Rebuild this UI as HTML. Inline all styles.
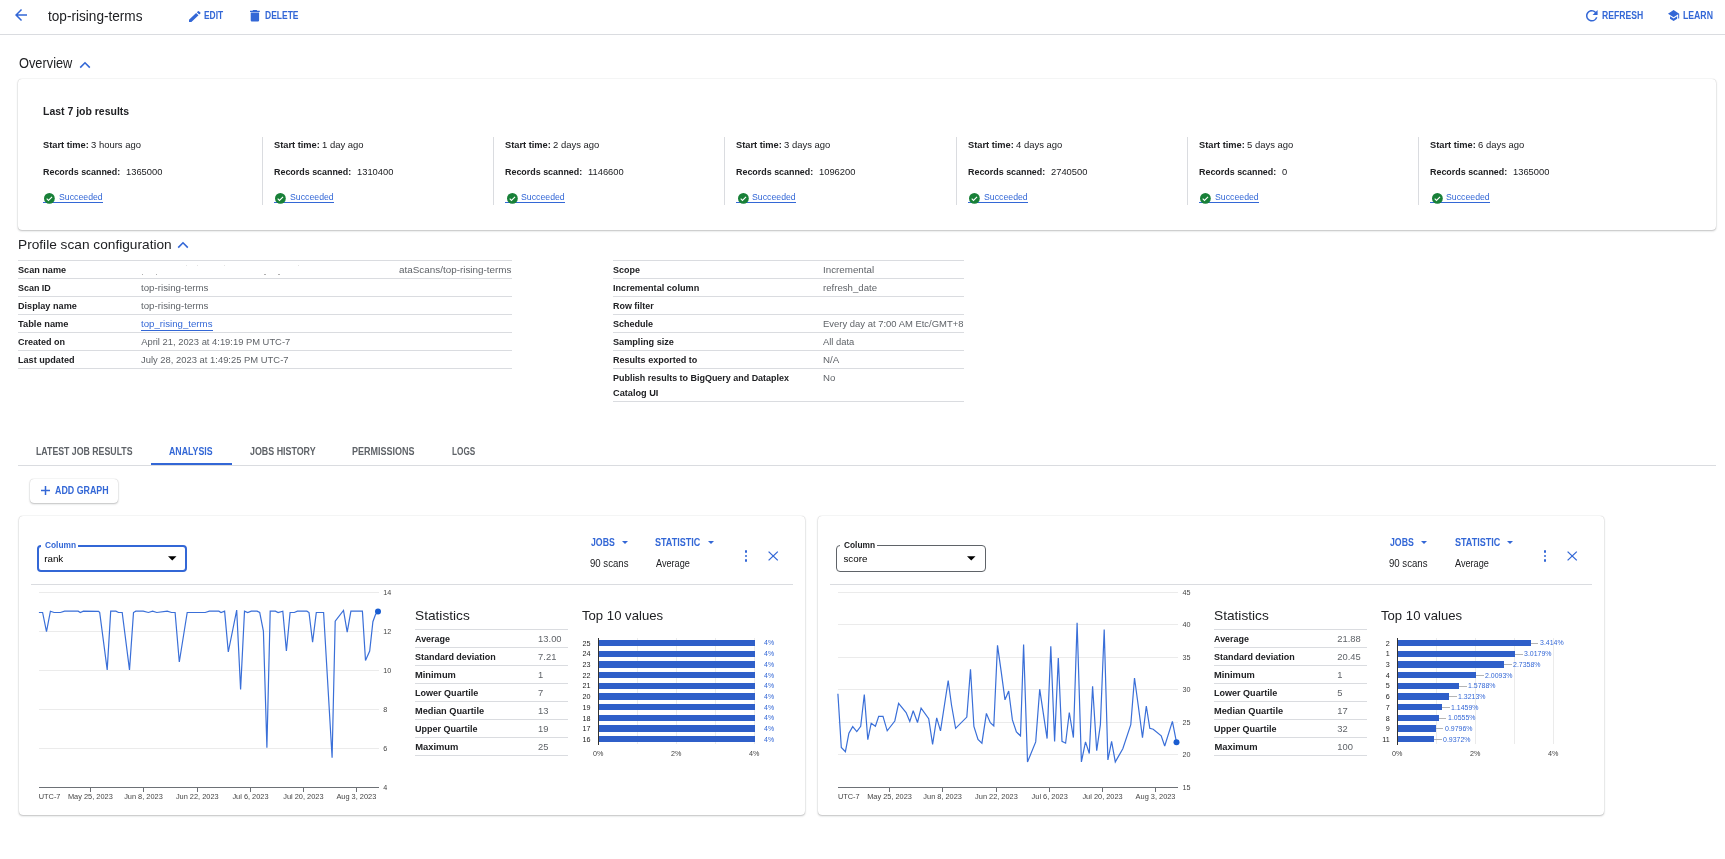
<!DOCTYPE html>
<html><head><meta charset="utf-8"><title>top-rising-terms</title>
<style>
html,body{margin:0;padding:0;background:#fff;width:1725px;height:859px;overflow:hidden;position:relative;font-family:"Liberation Sans", sans-serif;}
.t{position:absolute;white-space:pre;}
svg{position:absolute;overflow:visible;}
</style></head><body><div id="root" style="position:absolute;left:0;top:0;width:1725px;height:859px;will-change:transform">
<div style="position:absolute;left:0px;top:34px;width:1725px;height:1px;background:#dadce0;"></div><svg style="left:15px;top:9px" width="12.00" height="12.00" viewBox="4 4 16 16" preserveAspectRatio="none"><path d="M20 11H7.83l5.59-5.59L12 4l-8 8 8 8 1.41-1.41L7.83 13H20v-2z" fill="#3367d6"/></svg><svg style="left:188.9px;top:10.5px" width="11.40" height="11.00" viewBox="3 3 17.71 18" preserveAspectRatio="none"><path d="M3 17.25V21h3.75L17.81 9.94l-3.75-3.75L3 17.25zM20.71 7.04a1 1 0 0 0 0-1.41l-2.34-2.34a1 1 0 0 0-1.41 0l-1.83 1.83 3.75 3.75 1.83-1.83z" fill="#3367d6"/></svg><svg style="left:250.2px;top:10.1px" width="9.80" height="11.40" viewBox="5 3 14 18" preserveAspectRatio="none"><path d="M6 19c0 1.1.9 2 2 2h8c1.1 0 2-.9 2-2V7H6v12zM19 4h-3.5l-1-1h-5l-1 1H5v2h14V4z" fill="#3367d6"/></svg><svg style="left:1586.3px;top:10px" width="11.60" height="11.50" viewBox="4 4 16 16" preserveAspectRatio="none"><path d="M17.65 6.35A7.958 7.958 0 0 0 12 4c-4.42 0-7.99 3.58-7.99 8s3.57 8 7.99 8c3.73 0 6.84-2.55 7.73-6h-2.08A5.99 5.99 0 0 1 12 18c-3.31 0-6-2.69-6-6s2.69-6 6-6c1.66 0 3.14.69 4.22 1.78L13 11h7V4l-2.35 2.35z" fill="#3367d6"/></svg><svg style="left:1668.1px;top:10.3px" width="11.20" height="11.00" viewBox="1 3 22 18" preserveAspectRatio="none"><path d="M5 13.18v4L12 21l7-3.82v-4L12 17l-7-3.82zM12 3 1 9l11 6 9-4.91V17h2V9L12 3z" fill="#3367d6"/></svg><svg style="left:79px;top:61px" width="12" height="8" viewBox="0 0 12 8"><path d="M1.2 6.6 6 1.8l4.8 4.8" stroke="#3367d6" stroke-width="1.6" fill="none"/></svg><div style="position:absolute;left:18px;top:79px;width:1697.5px;height:150.5px;background:#fff;border-radius:4px;box-shadow:0 1px 2px 0 rgba(60,64,67,.3),0 0 1px 0 rgba(60,64,67,.35)"></div><div style="position:absolute;left:42.9px;top:202px;width:60.1px;height:1px;background:#3367d6;"></div><svg style="left:44.2px;top:192.5px" width="10.8" height="10.8" viewBox="0 0 24 24"><circle cx="12" cy="12" r="12" fill="#188038"/><path d="M6 12.6l3.9 3.9 8-8" stroke="#fff" stroke-width="2.4" fill="none"/></svg><div style="position:absolute;left:262px;top:137px;width:1px;height:68px;background:#dadce0;"></div><div style="position:absolute;left:274.0px;top:202px;width:60.1px;height:1px;background:#3367d6;"></div><svg style="left:275.3px;top:192.5px" width="10.8" height="10.8" viewBox="0 0 24 24"><circle cx="12" cy="12" r="12" fill="#188038"/><path d="M6 12.6l3.9 3.9 8-8" stroke="#fff" stroke-width="2.4" fill="none"/></svg><div style="position:absolute;left:493px;top:137px;width:1px;height:68px;background:#dadce0;"></div><div style="position:absolute;left:505.3px;top:202px;width:60.1px;height:1px;background:#3367d6;"></div><svg style="left:506.6px;top:192.5px" width="10.8" height="10.8" viewBox="0 0 24 24"><circle cx="12" cy="12" r="12" fill="#188038"/><path d="M6 12.6l3.9 3.9 8-8" stroke="#fff" stroke-width="2.4" fill="none"/></svg><div style="position:absolute;left:724px;top:137px;width:1px;height:68px;background:#dadce0;"></div><div style="position:absolute;left:736.4px;top:202px;width:60.1px;height:1px;background:#3367d6;"></div><svg style="left:737.7px;top:192.5px" width="10.8" height="10.8" viewBox="0 0 24 24"><circle cx="12" cy="12" r="12" fill="#188038"/><path d="M6 12.6l3.9 3.9 8-8" stroke="#fff" stroke-width="2.4" fill="none"/></svg><div style="position:absolute;left:956px;top:137px;width:1px;height:68px;background:#dadce0;"></div><div style="position:absolute;left:968.0px;top:202px;width:60.1px;height:1px;background:#3367d6;"></div><svg style="left:969.3px;top:192.5px" width="10.8" height="10.8" viewBox="0 0 24 24"><circle cx="12" cy="12" r="12" fill="#188038"/><path d="M6 12.6l3.9 3.9 8-8" stroke="#fff" stroke-width="2.4" fill="none"/></svg><div style="position:absolute;left:1187px;top:137px;width:1px;height:68px;background:#dadce0;"></div><div style="position:absolute;left:1199.1px;top:202px;width:60.1px;height:1px;background:#3367d6;"></div><svg style="left:1200.4px;top:192.5px" width="10.8" height="10.8" viewBox="0 0 24 24"><circle cx="12" cy="12" r="12" fill="#188038"/><path d="M6 12.6l3.9 3.9 8-8" stroke="#fff" stroke-width="2.4" fill="none"/></svg><div style="position:absolute;left:1418px;top:137px;width:1px;height:68px;background:#dadce0;"></div><div style="position:absolute;left:1430.3px;top:202px;width:60.1px;height:1px;background:#3367d6;"></div><svg style="left:1431.6px;top:192.5px" width="10.8" height="10.8" viewBox="0 0 24 24"><circle cx="12" cy="12" r="12" fill="#188038"/><path d="M6 12.6l3.9 3.9 8-8" stroke="#fff" stroke-width="2.4" fill="none"/></svg><svg style="left:177px;top:241px" width="12" height="8" viewBox="0 0 12 8"><path d="M1.2 6.6 6 1.8l4.8 4.8" stroke="#3367d6" stroke-width="1.6" fill="none"/></svg><div style="position:absolute;left:18px;top:260px;width:494px;height:1px;background:#dadce0;"></div><div style="position:absolute;left:18px;top:278px;width:494px;height:1px;background:#dadce0;"></div><div style="position:absolute;left:18px;top:296px;width:494px;height:1px;background:#dadce0;"></div><div style="position:absolute;left:18px;top:314px;width:494px;height:1px;background:#dadce0;"></div><div style="position:absolute;left:18px;top:332px;width:494px;height:1px;background:#dadce0;"></div><div style="position:absolute;left:18px;top:350px;width:494px;height:1px;background:#dadce0;"></div><div style="position:absolute;left:18px;top:368px;width:494px;height:1px;background:#dadce0;"></div><div style="position:absolute;left:141.5px;top:274px;width:1.5px;height:1px;background:#b0b0b0;"></div><div style="position:absolute;left:155.5px;top:274px;width:1.5px;height:1px;background:#b0b0b0;"></div><div style="position:absolute;left:264px;top:274px;width:1.5px;height:1px;background:#b0b0b0;"></div><div style="position:absolute;left:278px;top:274px;width:1.5px;height:1px;background:#b0b0b0;"></div><div style="position:absolute;left:185.5px;top:265px;width:1px;height:1px;background:#e4e4e4;"></div><div style="position:absolute;left:196.5px;top:265px;width:1px;height:1px;background:#e4e4e4;"></div><div style="position:absolute;left:224px;top:265px;width:1px;height:1px;background:#e4e4e4;"></div><div style="position:absolute;left:298px;top:265px;width:1px;height:1px;background:#e4e4e4;"></div><div style="position:absolute;left:141px;top:330px;width:72px;height:1px;background:#3367d6;"></div><div style="position:absolute;left:613px;top:260px;width:351px;height:1px;background:#dadce0;"></div><div style="position:absolute;left:613px;top:278px;width:351px;height:1px;background:#dadce0;"></div><div style="position:absolute;left:613px;top:296px;width:351px;height:1px;background:#dadce0;"></div><div style="position:absolute;left:613px;top:314px;width:351px;height:1px;background:#dadce0;"></div><div style="position:absolute;left:613px;top:332px;width:351px;height:1px;background:#dadce0;"></div><div style="position:absolute;left:613px;top:350px;width:351px;height:1px;background:#dadce0;"></div><div style="position:absolute;left:613px;top:368px;width:351px;height:1px;background:#dadce0;"></div><div style="position:absolute;left:613px;top:401px;width:351px;height:1px;background:#dadce0;"></div><div style="position:absolute;left:18px;top:465px;width:1698px;height:1px;background:#dadce0;"></div><div style="position:absolute;left:151px;top:463px;width:81px;height:2px;background:#3367d6;"></div><div style="position:absolute;left:30px;top:479px;width:88px;height:24px;background:#fff;border-radius:4px;box-shadow:0 1px 2px 0 rgba(60,64,67,.3),0 0 1px 0 rgba(60,64,67,.35)"></div><svg style="left:40px;top:485px" width="11" height="11" viewBox="0 0 11 11"><path d="M5.5 1v9M1 5.5h9" stroke="#3367d6" stroke-width="1.5"/></svg><div style="position:absolute;left:18.5px;top:516px;width:786.5px;height:298.5px;background:#fff;border-radius:4px;box-shadow:0 1px 2px 0 rgba(60,64,67,.3),0 0 1px 0 rgba(60,64,67,.35)"></div><div style="position:absolute;left:37.3px;top:545px;width:149.5px;height:27px;box-sizing:border-box;border:2px solid #3367d6;border-radius:4px"></div><div style="position:absolute;left:41.0px;top:542px;width:36.8px;height:5px;background:#fff;"></div><svg style="left:167.5px;top:556.3px" width="8.5" height="4.6" viewBox="0 0 10 5"><path d="M0 0h10L5 5z" fill="#000"/></svg><svg style="left:621.5px;top:541px" width="6" height="3" viewBox="0 0 10 5"><path d="M0 0h10L5 5z" fill="#3367d6"/></svg><svg style="left:707.8px;top:541px" width="6" height="3" viewBox="0 0 10 5"><path d="M0 0h10L5 5z" fill="#3367d6"/></svg><div style="position:absolute;left:744.6px;top:550.2px;width:2.6px;height:2.6px;border-radius:50%;background:#3367d6"></div><div style="position:absolute;left:744.6px;top:554.7px;width:2.6px;height:2.6px;border-radius:50%;background:#3367d6"></div><div style="position:absolute;left:744.6px;top:559.2px;width:2.6px;height:2.6px;border-radius:50%;background:#3367d6"></div><svg style="left:767.6px;top:551px" width="10.4" height="10" viewBox="0 0 10.4 10"><path d="M0.6 0.6l9.2 8.8M9.8 0.6l-9.2 8.8" stroke="#3367d6" stroke-width="1.3"/></svg><div style="position:absolute;left:31px;top:584px;width:762px;height:1px;background:#dadce0;"></div><div style="position:absolute;left:38.5px;top:592px;width:340px;height:1px;background:#ebebeb;"></div><div style="position:absolute;left:38.5px;top:631px;width:340px;height:1px;background:#ebebeb;"></div><div style="position:absolute;left:38.5px;top:670px;width:340px;height:1px;background:#ebebeb;"></div><div style="position:absolute;left:38.5px;top:709px;width:340px;height:1px;background:#ebebeb;"></div><div style="position:absolute;left:38.5px;top:748px;width:340px;height:1px;background:#ebebeb;"></div><div style="position:absolute;left:38.5px;top:787px;width:340px;height:1px;background:#6d7176;"></div><div style="position:absolute;left:90px;top:788px;width:1px;height:4px;background:#6d7176;"></div><div style="position:absolute;left:143px;top:788px;width:1px;height:4px;background:#6d7176;"></div><div style="position:absolute;left:197px;top:788px;width:1px;height:4px;background:#6d7176;"></div><div style="position:absolute;left:250px;top:788px;width:1px;height:4px;background:#6d7176;"></div><div style="position:absolute;left:303px;top:788px;width:1px;height:4px;background:#6d7176;"></div><div style="position:absolute;left:356px;top:788px;width:1px;height:4px;background:#6d7176;"></div><svg style="left:18px;top:580px" width="1200" height="200"><polyline points="20.9,32.5 24.6,32.5 28.5,51.6 32.4,31.2 36.1,32.5 42.4,32.5 46.6,31.2 60.2,31.2 62.3,32.5 65.4,31.2 80.6,31.4 81.7,32.5 89.2,89.9 92.7,31.2 97.9,31.2 100.5,32.5 104.2,32.5 111.5,89.9 115.5,32.5 117.8,31.2 125.2,31.2 130.4,32.5 134.6,31.2 138.8,32.5 149.3,31.2 153.5,32.5 157.1,32.5 161.3,82.0 169.2,32.5 187.2,32.5 191.4,31.2 200.9,31.2 203.0,32.5 206.6,31.2 210.3,72.0 218.7,30.1 222.6,109.5 226.5,31.2 229.7,32.5 233.3,31.2 239.1,31.2 241.7,32.5 245.4,51.1 248.9,167.8 252.2,31.2 257.4,31.2 260.1,32.5 264.8,31.2 268.4,71.0 272.1,32.5 276.3,32.5 279.4,31.2 288.9,31.2 291.0,32.5 294.6,62.1 298.3,32.5 305.6,32.5 314.1,177.7 317.2,41.1 325.5,30.5 329.2,52.2 332.9,31.2 344.4,31.2 347.5,80.4 351.7,71.0 354.9,41.7 357.5,34.5 360.0,31.4" fill="none" stroke="#3a6fd8" stroke-width="1.2" stroke-linejoin="miter" stroke-miterlimit="3"/><circle cx="360.0" cy="31.4" r="3" fill="#1a5dd1"/></svg><div style="position:absolute;left:415px;top:629px;width:153px;height:1px;background:#dadce0;"></div><div style="position:absolute;left:415px;top:647px;width:153px;height:1px;background:#dadce0;"></div><div style="position:absolute;left:415px;top:665px;width:153px;height:1px;background:#dadce0;"></div><div style="position:absolute;left:415px;top:683px;width:153px;height:1px;background:#dadce0;"></div><div style="position:absolute;left:415px;top:701px;width:153px;height:1px;background:#dadce0;"></div><div style="position:absolute;left:415px;top:719px;width:153px;height:1px;background:#dadce0;"></div><div style="position:absolute;left:415px;top:737px;width:153px;height:1px;background:#dadce0;"></div><div style="position:absolute;left:415px;top:755px;width:153px;height:1px;background:#dadce0;"></div><div style="position:absolute;left:637px;top:638px;width:1px;height:106px;background:#ebebeb;"></div><div style="position:absolute;left:676px;top:638px;width:1px;height:106px;background:#ebebeb;"></div><div style="position:absolute;left:715px;top:638px;width:1px;height:106px;background:#ebebeb;"></div><div style="position:absolute;left:754px;top:638px;width:1px;height:106px;background:#ebebeb;"></div><div style="position:absolute;left:598.4px;top:639.8px;width:156.2px;height:6.4px;background:#2f5fc9;"></div><div style="position:absolute;left:598.4px;top:650.5px;width:156.2px;height:6.4px;background:#2f5fc9;"></div><div style="position:absolute;left:598.4px;top:661.2px;width:156.2px;height:6.4px;background:#2f5fc9;"></div><div style="position:absolute;left:598.4px;top:671.9px;width:156.2px;height:6.4px;background:#2f5fc9;"></div><div style="position:absolute;left:598.4px;top:682.6px;width:156.2px;height:6.4px;background:#2f5fc9;"></div><div style="position:absolute;left:598.4px;top:693.3px;width:156.2px;height:6.4px;background:#2f5fc9;"></div><div style="position:absolute;left:598.4px;top:704.0px;width:156.2px;height:6.4px;background:#2f5fc9;"></div><div style="position:absolute;left:598.4px;top:714.7px;width:156.2px;height:6.4px;background:#2f5fc9;"></div><div style="position:absolute;left:598.4px;top:725.4px;width:156.2px;height:6.4px;background:#2f5fc9;"></div><div style="position:absolute;left:598.4px;top:736.1px;width:156.2px;height:6.4px;background:#2f5fc9;"></div><div style="position:absolute;left:597.9px;top:637.8px;width:1px;height:107px;background:#333;"></div><div style="position:absolute;left:817.7px;top:516px;width:786.5px;height:298.5px;background:#fff;border-radius:4px;box-shadow:0 1px 2px 0 rgba(60,64,67,.3),0 0 1px 0 rgba(60,64,67,.35)"></div><div style="position:absolute;left:836.2px;top:545px;width:149.5px;height:27px;box-sizing:border-box;border:1px solid #5f6368;border-radius:4px"></div><div style="position:absolute;left:840.0px;top:542px;width:36.8px;height:5px;background:#fff;"></div><svg style="left:966.7px;top:556.3px" width="8.5" height="4.6" viewBox="0 0 10 5"><path d="M0 0h10L5 5z" fill="#000"/></svg><svg style="left:1420.7px;top:541px" width="6" height="3" viewBox="0 0 10 5"><path d="M0 0h10L5 5z" fill="#3367d6"/></svg><svg style="left:1507.0px;top:541px" width="6" height="3" viewBox="0 0 10 5"><path d="M0 0h10L5 5z" fill="#3367d6"/></svg><div style="position:absolute;left:1543.8px;top:550.2px;width:2.6px;height:2.6px;border-radius:50%;background:#3367d6"></div><div style="position:absolute;left:1543.8px;top:554.7px;width:2.6px;height:2.6px;border-radius:50%;background:#3367d6"></div><div style="position:absolute;left:1543.8px;top:559.2px;width:2.6px;height:2.6px;border-radius:50%;background:#3367d6"></div><svg style="left:1566.8px;top:551px" width="10.4" height="10" viewBox="0 0 10.4 10"><path d="M0.6 0.6l9.2 8.8M9.8 0.6l-9.2 8.8" stroke="#3367d6" stroke-width="1.3"/></svg><div style="position:absolute;left:830.2px;top:584px;width:762px;height:1px;background:#dadce0;"></div><div style="position:absolute;left:837.7px;top:592px;width:340px;height:1px;background:#ebebeb;"></div><div style="position:absolute;left:837.7px;top:624px;width:340px;height:1px;background:#ebebeb;"></div><div style="position:absolute;left:837.7px;top:657px;width:340px;height:1px;background:#ebebeb;"></div><div style="position:absolute;left:837.7px;top:689px;width:340px;height:1px;background:#ebebeb;"></div><div style="position:absolute;left:837.7px;top:722px;width:340px;height:1px;background:#ebebeb;"></div><div style="position:absolute;left:837.7px;top:754px;width:340px;height:1px;background:#ebebeb;"></div><div style="position:absolute;left:837.7px;top:787px;width:340px;height:1px;background:#6d7176;"></div><div style="position:absolute;left:889.2px;top:788px;width:1px;height:4px;background:#6d7176;"></div><div style="position:absolute;left:942.2px;top:788px;width:1px;height:4px;background:#6d7176;"></div><div style="position:absolute;left:996.2px;top:788px;width:1px;height:4px;background:#6d7176;"></div><div style="position:absolute;left:1049.2px;top:788px;width:1px;height:4px;background:#6d7176;"></div><div style="position:absolute;left:1102.2px;top:788px;width:1px;height:4px;background:#6d7176;"></div><div style="position:absolute;left:1155.2px;top:788px;width:1px;height:4px;background:#6d7176;"></div><svg style="left:18px;top:580px" width="1200" height="200"><polyline points="819.9,113.7 823.3,167.4 827.4,171.7 830.9,153.1 834.7,146.6 838.8,151.6 842.7,146.3 846.3,114.5 849.8,159.6 853.2,143.2 857.4,146.3 860.7,136.4 865.0,136.4 869.2,150.8 876.8,141.0 880.6,123.3 888.1,132.6 891.8,141.4 895.2,130.8 899.5,142.5 903.1,128.1 910.7,138.7 914.6,164.4 918.7,137.9 922.5,150.8 930.2,100.5 933.5,125.0 937.6,148.3 948.8,137.1 952.5,89.3 955.9,146.5 960.0,159.5 963.9,163.2 968.4,133.4 972.3,142.7 975.8,145.9 979.5,65.4 983.3,92.4 987.0,119.8 990.7,111.0 994.4,139.9 998.4,152.0 1002.5,155.8 1005.6,64.5 1009.5,181.9 1017.7,161.9 1021.7,109.2 1029.1,158.6 1032.8,66.3 1036.6,161.4 1040.3,78.1 1044.0,161.4 1047.6,163.2 1051.3,132.5 1055.4,157.6 1059.1,42.7 1063.4,181.9 1067.5,161.9 1071.3,173.5 1074.6,106.4 1078.7,170.7 1082.4,144.6 1086.2,49.6 1089.9,180.0 1093.6,161.4 1097.3,181.9 1104.8,168.8 1112.8,144.6 1116.5,98.0 1120.3,126.0 1124.5,157.6 1128.3,126.0 1131.8,148.3 1135.2,149.2 1143.2,155.8 1146.7,166.0 1154.4,141.4 1158.5,162.3" fill="none" stroke="#3a6fd8" stroke-width="1.2" stroke-linejoin="miter" stroke-miterlimit="3"/><circle cx="1158.5" cy="162.3" r="3" fill="#1a5dd1"/></svg><div style="position:absolute;left:1214.2px;top:629px;width:153px;height:1px;background:#dadce0;"></div><div style="position:absolute;left:1214.2px;top:647px;width:153px;height:1px;background:#dadce0;"></div><div style="position:absolute;left:1214.2px;top:665px;width:153px;height:1px;background:#dadce0;"></div><div style="position:absolute;left:1214.2px;top:683px;width:153px;height:1px;background:#dadce0;"></div><div style="position:absolute;left:1214.2px;top:701px;width:153px;height:1px;background:#dadce0;"></div><div style="position:absolute;left:1214.2px;top:719px;width:153px;height:1px;background:#dadce0;"></div><div style="position:absolute;left:1214.2px;top:737px;width:153px;height:1px;background:#dadce0;"></div><div style="position:absolute;left:1214.2px;top:755px;width:153px;height:1px;background:#dadce0;"></div><div style="position:absolute;left:1436px;top:638px;width:1px;height:106px;background:#ebebeb;"></div><div style="position:absolute;left:1475px;top:638px;width:1px;height:106px;background:#ebebeb;"></div><div style="position:absolute;left:1514px;top:638px;width:1px;height:106px;background:#ebebeb;"></div><div style="position:absolute;left:1553px;top:638px;width:1px;height:106px;background:#ebebeb;"></div><div style="position:absolute;left:1397.6px;top:639.8px;width:133.1px;height:6.4px;background:#2f5fc9;"></div><div style="position:absolute;left:1530.7px;top:642.8px;width:7.5px;height:1px;background:#b4b4b4;"></div><div style="position:absolute;left:1397.6px;top:650.5px;width:117.7px;height:6.4px;background:#2f5fc9;"></div><div style="position:absolute;left:1515.3px;top:653.5px;width:7.5px;height:1px;background:#b4b4b4;"></div><div style="position:absolute;left:1397.6px;top:661.2px;width:106.7px;height:6.4px;background:#2f5fc9;"></div><div style="position:absolute;left:1504.3px;top:664.2px;width:7.5px;height:1px;background:#b4b4b4;"></div><div style="position:absolute;left:1397.6px;top:671.9px;width:78.4px;height:6.4px;background:#2f5fc9;"></div><div style="position:absolute;left:1476.0px;top:674.9px;width:7.5px;height:1px;background:#b4b4b4;"></div><div style="position:absolute;left:1397.6px;top:682.6px;width:61.6px;height:6.4px;background:#2f5fc9;"></div><div style="position:absolute;left:1459.2px;top:685.6px;width:7.5px;height:1px;background:#b4b4b4;"></div><div style="position:absolute;left:1397.6px;top:693.3px;width:51.5px;height:6.4px;background:#2f5fc9;"></div><div style="position:absolute;left:1449.1px;top:696.3px;width:7.5px;height:1px;background:#b4b4b4;"></div><div style="position:absolute;left:1397.6px;top:704.0px;width:44.7px;height:6.4px;background:#2f5fc9;"></div><div style="position:absolute;left:1442.3px;top:707.0px;width:7.5px;height:1px;background:#b4b4b4;"></div><div style="position:absolute;left:1397.6px;top:714.7px;width:41.2px;height:6.4px;background:#2f5fc9;"></div><div style="position:absolute;left:1438.8px;top:717.7px;width:7.5px;height:1px;background:#b4b4b4;"></div><div style="position:absolute;left:1397.6px;top:725.4px;width:38.2px;height:6.4px;background:#2f5fc9;"></div><div style="position:absolute;left:1435.8px;top:728.4px;width:7.5px;height:1px;background:#b4b4b4;"></div><div style="position:absolute;left:1397.6px;top:736.1px;width:36.6px;height:6.4px;background:#2f5fc9;"></div><div style="position:absolute;left:1434.2px;top:739.1px;width:7.5px;height:1px;background:#b4b4b4;"></div><div style="position:absolute;left:1397.1px;top:637.8px;width:1px;height:107px;background:#333;"></div>
<div class="t" style="left:48.00px;top:9px;font-size:14px;line-height:14px;color:#202124;transform:scaleX(0.9718);transform-origin:0 0;">top-rising-terms</div><div class="t" style="left:204.40px;top:11px;font-size:10.2px;line-height:10.2px;color:#3367d6;font-weight:700;transform:scaleX(0.8256);transform-origin:0 0;">EDIT</div><div class="t" style="left:264.80px;top:11px;font-size:10.2px;line-height:10.2px;color:#3367d6;font-weight:700;transform:scaleX(0.8343);transform-origin:0 0;">DELETE</div><div class="t" style="left:1601.50px;top:11px;font-size:10.2px;line-height:10.2px;color:#3367d6;font-weight:700;transform:scaleX(0.8464);transform-origin:0 0;">REFRESH</div><div class="t" style="left:1682.80px;top:11px;font-size:10.2px;line-height:10.2px;color:#3367d6;font-weight:700;transform:scaleX(0.8522);transform-origin:0 0;">LEARN</div><div class="t" style="left:18.60px;top:57px;font-size:13.8px;line-height:13.8px;color:#202124;transform:scaleX(0.9281);transform-origin:0 0;">Overview</div><div class="t" style="left:42.90px;top:106px;font-size:11px;line-height:11px;color:#202124;font-weight:700;transform:scaleX(0.9518);transform-origin:0 0;">Last 7 job results</div><div class="t" style="left:42.90px;top:140px;font-size:9.8px;line-height:9.8px;color:#202124;font-weight:700;transform:scaleX(0.9463);transform-origin:0 0;">Start time:</div><div class="t" style="left:90.90px;top:140px;font-size:9.8px;line-height:9.8px;color:#202124;transform:scaleX(0.9650);transform-origin:0 0;">3 hours ago</div><div class="t" style="left:42.90px;top:167px;font-size:9.8px;line-height:9.8px;color:#202124;font-weight:700;transform:scaleX(0.9094);transform-origin:0 0;">Records scanned:</div><div class="t" style="left:125.80px;top:167px;font-size:9.8px;line-height:9.8px;color:#202124;transform:scaleX(0.9550);transform-origin:0 0;">1365000</div><div class="t" style="left:58.70px;top:192px;font-size:9.8px;line-height:9.8px;color:#3367d6;transform:scaleX(0.8914);transform-origin:0 0;">Succeeded</div><div class="t" style="left:274.00px;top:140px;font-size:9.8px;line-height:9.8px;color:#202124;font-weight:700;transform:scaleX(0.9463);transform-origin:0 0;">Start time:</div><div class="t" style="left:322.00px;top:140px;font-size:9.8px;line-height:9.8px;color:#202124;transform:scaleX(0.9650);transform-origin:0 0;">1 day ago</div><div class="t" style="left:274.00px;top:167px;font-size:9.8px;line-height:9.8px;color:#202124;font-weight:700;transform:scaleX(0.9094);transform-origin:0 0;">Records scanned:</div><div class="t" style="left:356.90px;top:167px;font-size:9.8px;line-height:9.8px;color:#202124;transform:scaleX(0.9550);transform-origin:0 0;">1310400</div><div class="t" style="left:289.80px;top:192px;font-size:9.8px;line-height:9.8px;color:#3367d6;transform:scaleX(0.8914);transform-origin:0 0;">Succeeded</div><div class="t" style="left:505.30px;top:140px;font-size:9.8px;line-height:9.8px;color:#202124;font-weight:700;transform:scaleX(0.9463);transform-origin:0 0;">Start time:</div><div class="t" style="left:553.30px;top:140px;font-size:9.8px;line-height:9.8px;color:#202124;transform:scaleX(0.9650);transform-origin:0 0;">2 days ago</div><div class="t" style="left:505.30px;top:167px;font-size:9.8px;line-height:9.8px;color:#202124;font-weight:700;transform:scaleX(0.9094);transform-origin:0 0;">Records scanned:</div><div class="t" style="left:588.20px;top:167px;font-size:9.8px;line-height:9.8px;color:#202124;transform:scaleX(0.9550);transform-origin:0 0;">1146600</div><div class="t" style="left:521.10px;top:192px;font-size:9.8px;line-height:9.8px;color:#3367d6;transform:scaleX(0.8914);transform-origin:0 0;">Succeeded</div><div class="t" style="left:736.40px;top:140px;font-size:9.8px;line-height:9.8px;color:#202124;font-weight:700;transform:scaleX(0.9463);transform-origin:0 0;">Start time:</div><div class="t" style="left:784.40px;top:140px;font-size:9.8px;line-height:9.8px;color:#202124;transform:scaleX(0.9650);transform-origin:0 0;">3 days ago</div><div class="t" style="left:736.40px;top:167px;font-size:9.8px;line-height:9.8px;color:#202124;font-weight:700;transform:scaleX(0.9094);transform-origin:0 0;">Records scanned:</div><div class="t" style="left:819.30px;top:167px;font-size:9.8px;line-height:9.8px;color:#202124;transform:scaleX(0.9550);transform-origin:0 0;">1096200</div><div class="t" style="left:752.20px;top:192px;font-size:9.8px;line-height:9.8px;color:#3367d6;transform:scaleX(0.8914);transform-origin:0 0;">Succeeded</div><div class="t" style="left:968.00px;top:140px;font-size:9.8px;line-height:9.8px;color:#202124;font-weight:700;transform:scaleX(0.9463);transform-origin:0 0;">Start time:</div><div class="t" style="left:1016.00px;top:140px;font-size:9.8px;line-height:9.8px;color:#202124;transform:scaleX(0.9650);transform-origin:0 0;">4 days ago</div><div class="t" style="left:968.00px;top:167px;font-size:9.8px;line-height:9.8px;color:#202124;font-weight:700;transform:scaleX(0.9094);transform-origin:0 0;">Records scanned:</div><div class="t" style="left:1050.90px;top:167px;font-size:9.8px;line-height:9.8px;color:#202124;transform:scaleX(0.9550);transform-origin:0 0;">2740500</div><div class="t" style="left:983.80px;top:192px;font-size:9.8px;line-height:9.8px;color:#3367d6;transform:scaleX(0.8914);transform-origin:0 0;">Succeeded</div><div class="t" style="left:1199.10px;top:140px;font-size:9.8px;line-height:9.8px;color:#202124;font-weight:700;transform:scaleX(0.9463);transform-origin:0 0;">Start time:</div><div class="t" style="left:1247.10px;top:140px;font-size:9.8px;line-height:9.8px;color:#202124;transform:scaleX(0.9650);transform-origin:0 0;">5 days ago</div><div class="t" style="left:1199.10px;top:167px;font-size:9.8px;line-height:9.8px;color:#202124;font-weight:700;transform:scaleX(0.9094);transform-origin:0 0;">Records scanned:</div><div class="t" style="left:1282.00px;top:167px;font-size:9.8px;line-height:9.8px;color:#202124;transform:scaleX(0.9550);transform-origin:0 0;">0</div><div class="t" style="left:1214.90px;top:192px;font-size:9.8px;line-height:9.8px;color:#3367d6;transform:scaleX(0.8914);transform-origin:0 0;">Succeeded</div><div class="t" style="left:1430.30px;top:140px;font-size:9.8px;line-height:9.8px;color:#202124;font-weight:700;transform:scaleX(0.9463);transform-origin:0 0;">Start time:</div><div class="t" style="left:1478.30px;top:140px;font-size:9.8px;line-height:9.8px;color:#202124;transform:scaleX(0.9650);transform-origin:0 0;">6 days ago</div><div class="t" style="left:1430.30px;top:167px;font-size:9.8px;line-height:9.8px;color:#202124;font-weight:700;transform:scaleX(0.9094);transform-origin:0 0;">Records scanned:</div><div class="t" style="left:1513.20px;top:167px;font-size:9.8px;line-height:9.8px;color:#202124;transform:scaleX(0.9550);transform-origin:0 0;">1365000</div><div class="t" style="left:1446.10px;top:192px;font-size:9.8px;line-height:9.8px;color:#3367d6;transform:scaleX(0.8914);transform-origin:0 0;">Succeeded</div><div class="t" style="left:17.59px;top:238px;font-size:13.5px;line-height:13.5px;color:#202124;transform:scaleX(1.0141);transform-origin:0 0;">Profile scan configuration</div><div class="t" style="left:18.30px;top:265px;font-size:9.4px;line-height:9.4px;color:#202124;font-weight:700;transform:scaleX(0.9718);transform-origin:0 0;">Scan name</div><div class="t" style="left:398.60px;top:265px;font-size:9.4px;line-height:9.4px;color:#5f6368;transform:scaleX(1.0530);transform-origin:0 0;">ataScans/top-rising-terms</div><div class="t" style="left:18.30px;top:283px;font-size:9.4px;line-height:9.4px;color:#202124;font-weight:700;transform:scaleX(0.9533);transform-origin:0 0;">Scan ID</div><div class="t" style="left:141.20px;top:283px;font-size:9.4px;line-height:9.4px;color:#5f6368;transform:scaleX(1.0362);transform-origin:0 0;">top-rising-terms</div><div class="t" style="left:18.30px;top:301px;font-size:9.4px;line-height:9.4px;color:#202124;font-weight:700;transform:scaleX(0.9730);transform-origin:0 0;">Display name</div><div class="t" style="left:141.20px;top:301px;font-size:9.4px;line-height:9.4px;color:#5f6368;transform:scaleX(1.0362);transform-origin:0 0;">top-rising-terms</div><div class="t" style="left:18.30px;top:319px;font-size:9.4px;line-height:9.4px;color:#202124;font-weight:700;transform:scaleX(0.9927);transform-origin:0 0;">Table name</div><div class="t" style="left:141.20px;top:319px;font-size:9.4px;line-height:9.4px;color:#3367d6;transform:scaleX(1.0314);transform-origin:0 0;">top_rising_terms</div><div class="t" style="left:18.30px;top:337px;font-size:9.4px;line-height:9.4px;color:#202124;font-weight:700;transform:scaleX(0.9626);transform-origin:0 0;">Created on</div><div class="t" style="left:141.20px;top:337px;font-size:9.4px;line-height:9.4px;color:#5f6368;">April 21, 2023 at 4:19:19 PM UTC-7</div><div class="t" style="left:18.30px;top:355px;font-size:9.4px;line-height:9.4px;color:#202124;font-weight:700;transform:scaleX(0.9691);transform-origin:0 0;">Last updated</div><div class="t" style="left:141.20px;top:355px;font-size:9.4px;line-height:9.4px;color:#5f6368;transform:scaleX(1.0038);transform-origin:0 0;">July 28, 2023 at 1:49:25 PM UTC-7</div><div class="t" style="left:613.20px;top:265px;font-size:9.4px;line-height:9.4px;color:#202124;font-weight:700;transform:scaleX(0.9563);transform-origin:0 0;">Scope</div><div class="t" style="left:823.00px;top:265px;font-size:9.4px;line-height:9.4px;color:#5f6368;transform:scaleX(1.0430);transform-origin:0 0;">Incremental</div><div class="t" style="left:613.20px;top:283px;font-size:9.4px;line-height:9.4px;color:#202124;font-weight:700;transform:scaleX(0.9737);transform-origin:0 0;">Incremental column</div><div class="t" style="left:823.00px;top:283px;font-size:9.4px;line-height:9.4px;color:#5f6368;transform:scaleX(1.0262);transform-origin:0 0;">refresh_date</div><div class="t" style="left:613.20px;top:301px;font-size:9.4px;line-height:9.4px;color:#202124;font-weight:700;transform:scaleX(0.9521);transform-origin:0 0;">Row filter</div><div class="t" style="left:613.20px;top:319px;font-size:9.4px;line-height:9.4px;color:#202124;font-weight:700;transform:scaleX(0.9622);transform-origin:0 0;">Schedule</div><div class="t" style="left:823.00px;top:319px;font-size:9.4px;line-height:9.4px;color:#5f6368;transform:scaleX(1.0080);transform-origin:0 0;">Every day at 7:00 AM Etc/GMT+8</div><div class="t" style="left:613.20px;top:337px;font-size:9.4px;line-height:9.4px;color:#202124;font-weight:700;transform:scaleX(0.9743);transform-origin:0 0;">Sampling size</div><div class="t" style="left:823.00px;top:337px;font-size:9.4px;line-height:9.4px;color:#5f6368;">All data</div><div class="t" style="left:613.20px;top:355px;font-size:9.4px;line-height:9.4px;color:#202124;font-weight:700;transform:scaleX(0.9637);transform-origin:0 0;">Results exported to</div><div class="t" style="left:823.00px;top:355px;font-size:9.4px;line-height:9.4px;color:#5f6368;transform:scaleX(1.0382);transform-origin:0 0;">N/A</div><div class="t" style="left:613.20px;top:373px;font-size:9.4px;line-height:9.4px;color:#202124;font-weight:700;transform:scaleX(0.9541);transform-origin:0 0;">Publish results to BigQuery and Dataplex</div><div class="t" style="left:823.00px;top:373px;font-size:9.4px;line-height:9.4px;color:#5f6368;transform:scaleX(1.0280);transform-origin:0 0;">No</div><div class="t" style="left:613.20px;top:388px;font-size:9.4px;line-height:9.4px;color:#202124;font-weight:700;transform:scaleX(0.9792);transform-origin:0 0;">Catalog UI</div><div class="t" style="left:36.40px;top:447px;font-size:10.2px;line-height:10.2px;color:#5f6368;font-weight:700;transform:scaleX(0.8599);transform-origin:0 0;">LATEST JOB RESULTS</div><div class="t" style="left:169.20px;top:447px;font-size:10.2px;line-height:10.2px;color:#3367d6;font-weight:700;transform:scaleX(0.8626);transform-origin:0 0;">ANALYSIS</div><div class="t" style="left:249.90px;top:447px;font-size:10.2px;line-height:10.2px;color:#5f6368;font-weight:700;transform:scaleX(0.8716);transform-origin:0 0;">JOBS HISTORY</div><div class="t" style="left:352.30px;top:447px;font-size:10.2px;line-height:10.2px;color:#5f6368;font-weight:700;transform:scaleX(0.8835);transform-origin:0 0;">PERMISSIONS</div><div class="t" style="left:451.60px;top:447px;font-size:10.2px;line-height:10.2px;color:#5f6368;font-weight:700;transform:scaleX(0.8049);transform-origin:0 0;">LOGS</div><div class="t" style="left:55.20px;top:486px;font-size:10.2px;line-height:10.2px;color:#3367d6;font-weight:700;transform:scaleX(0.8690);transform-origin:0 0;">ADD GRAPH</div><div class="t" style="left:45.20px;top:541px;font-size:8.8px;line-height:8.8px;color:#3367d6;font-weight:700;transform:scaleX(0.9485);transform-origin:0 0;">Column</div><div class="t" style="left:44.20px;top:554px;font-size:9.8px;line-height:9.8px;color:#000;">rank</div><div class="t" style="left:591.00px;top:538px;font-size:10.2px;line-height:10.2px;color:#3367d6;font-weight:700;transform:scaleX(0.8588);transform-origin:0 0;">JOBS</div><div class="t" style="left:655.40px;top:538px;font-size:10.2px;line-height:10.2px;color:#3367d6;font-weight:700;transform:scaleX(0.8867);transform-origin:0 0;">STATISTIC</div><div class="t" style="left:589.60px;top:559px;font-size:10px;line-height:10px;color:#202124;transform:scaleX(0.9619);transform-origin:0 0;">90 scans</div><div class="t" style="left:656.00px;top:559px;font-size:10px;line-height:10px;color:#202124;transform:scaleX(0.9119);transform-origin:0 0;">Average</div><div class="t" style="left:383.20px;top:589px;font-size:7.2px;line-height:7.2px;color:#444;">14</div><div class="t" style="left:383.20px;top:628px;font-size:7.2px;line-height:7.2px;color:#444;">12</div><div class="t" style="left:383.20px;top:667px;font-size:7.2px;line-height:7.2px;color:#444;">10</div><div class="t" style="left:383.20px;top:706px;font-size:7.2px;line-height:7.2px;color:#444;">8</div><div class="t" style="left:383.20px;top:745px;font-size:7.2px;line-height:7.2px;color:#444;">6</div><div class="t" style="left:383.20px;top:784px;font-size:7.2px;line-height:7.2px;color:#444;">4</div><div class="t" style="left:67.96px;top:793px;font-size:7.4px;line-height:7.4px;color:#444;">May 25, 2023</div><div class="t" style="left:124.14px;top:793px;font-size:7.4px;line-height:7.4px;color:#444;">Jun 8, 2023</div><div class="t" style="left:175.89px;top:793px;font-size:7.4px;line-height:7.4px;color:#444;">Jun 22, 2023</div><div class="t" style="left:232.38px;top:793px;font-size:7.4px;line-height:7.4px;color:#444;">Jul 6, 2023</div><div class="t" style="left:283.22px;top:793px;font-size:7.4px;line-height:7.4px;color:#444;">Jul 20, 2023</div><div class="t" style="left:336.42px;top:793px;font-size:7.4px;line-height:7.4px;color:#444;">Aug 3, 2023</div><div class="t" style="left:38.70px;top:793px;font-size:7.4px;line-height:7.4px;color:#444;">UTC-7</div><div class="t" style="left:415.20px;top:609px;font-size:13.5px;line-height:13.5px;color:#202124;transform:scaleX(1.0136);transform-origin:0 0;">Statistics</div><div class="t" style="left:415.20px;top:634px;font-size:9.4px;line-height:9.4px;color:#202124;font-weight:700;transform:scaleX(0.9550);transform-origin:0 0;">Average</div><div class="t" style="left:538.10px;top:634px;font-size:9.4px;line-height:9.4px;color:#5f6368;">13.00</div><div class="t" style="left:415.20px;top:652px;font-size:9.4px;line-height:9.4px;color:#202124;font-weight:700;transform:scaleX(0.9567);transform-origin:0 0;">Standard deviation</div><div class="t" style="left:538.10px;top:652px;font-size:9.4px;line-height:9.4px;color:#5f6368;">7.21</div><div class="t" style="left:415.20px;top:670px;font-size:9.4px;line-height:9.4px;color:#202124;font-weight:700;transform:scaleX(0.9925);transform-origin:0 0;">Minimum</div><div class="t" style="left:538.10px;top:670px;font-size:9.4px;line-height:9.4px;color:#5f6368;">1</div><div class="t" style="left:415.20px;top:688px;font-size:9.4px;line-height:9.4px;color:#202124;font-weight:700;transform:scaleX(0.9629);transform-origin:0 0;">Lower Quartile</div><div class="t" style="left:538.10px;top:688px;font-size:9.4px;line-height:9.4px;color:#5f6368;">7</div><div class="t" style="left:415.20px;top:706px;font-size:9.4px;line-height:9.4px;color:#202124;font-weight:700;transform:scaleX(0.9827);transform-origin:0 0;">Median Quartile</div><div class="t" style="left:538.10px;top:706px;font-size:9.4px;line-height:9.4px;color:#5f6368;">13</div><div class="t" style="left:415.20px;top:724px;font-size:9.4px;line-height:9.4px;color:#202124;font-weight:700;transform:scaleX(0.9614);transform-origin:0 0;">Upper Quartile</div><div class="t" style="left:538.10px;top:724px;font-size:9.4px;line-height:9.4px;color:#5f6368;">19</div><div class="t" style="left:415.20px;top:742px;font-size:9.4px;line-height:9.4px;color:#202124;font-weight:700;">Maximum</div><div class="t" style="left:538.10px;top:742px;font-size:9.4px;line-height:9.4px;color:#5f6368;">25</div><div class="t" style="left:581.70px;top:609px;font-size:13.5px;line-height:13.5px;color:#202124;transform:scaleX(0.9730);transform-origin:0 0;">Top 10 values</div><div class="t" style="left:763.60px;top:639px;font-size:7.2px;line-height:7.2px;color:#3367d6;transform:scaleX(0.9700);transform-origin:0 0;">4%</div><div class="t" style="left:582.60px;top:640px;font-size:7.2px;line-height:7.2px;color:#222;">25</div><div class="t" style="left:763.60px;top:650px;font-size:7.2px;line-height:7.2px;color:#3367d6;transform:scaleX(0.9700);transform-origin:0 0;">4%</div><div class="t" style="left:582.60px;top:650px;font-size:7.2px;line-height:7.2px;color:#222;">24</div><div class="t" style="left:763.60px;top:661px;font-size:7.2px;line-height:7.2px;color:#3367d6;transform:scaleX(0.9700);transform-origin:0 0;">4%</div><div class="t" style="left:582.60px;top:661px;font-size:7.2px;line-height:7.2px;color:#222;">23</div><div class="t" style="left:763.60px;top:672px;font-size:7.2px;line-height:7.2px;color:#3367d6;transform:scaleX(0.9700);transform-origin:0 0;">4%</div><div class="t" style="left:582.60px;top:672px;font-size:7.2px;line-height:7.2px;color:#222;">22</div><div class="t" style="left:763.60px;top:682px;font-size:7.2px;line-height:7.2px;color:#3367d6;transform:scaleX(0.9700);transform-origin:0 0;">4%</div><div class="t" style="left:582.60px;top:682px;font-size:7.2px;line-height:7.2px;color:#222;">21</div><div class="t" style="left:763.60px;top:693px;font-size:7.2px;line-height:7.2px;color:#3367d6;transform:scaleX(0.9700);transform-origin:0 0;">4%</div><div class="t" style="left:582.60px;top:693px;font-size:7.2px;line-height:7.2px;color:#222;">20</div><div class="t" style="left:763.60px;top:704px;font-size:7.2px;line-height:7.2px;color:#3367d6;transform:scaleX(0.9700);transform-origin:0 0;">4%</div><div class="t" style="left:582.60px;top:704px;font-size:7.2px;line-height:7.2px;color:#222;">19</div><div class="t" style="left:763.60px;top:714px;font-size:7.2px;line-height:7.2px;color:#3367d6;transform:scaleX(0.9700);transform-origin:0 0;">4%</div><div class="t" style="left:582.60px;top:715px;font-size:7.2px;line-height:7.2px;color:#222;">18</div><div class="t" style="left:763.60px;top:725px;font-size:7.2px;line-height:7.2px;color:#3367d6;transform:scaleX(0.9700);transform-origin:0 0;">4%</div><div class="t" style="left:582.60px;top:725px;font-size:7.2px;line-height:7.2px;color:#222;">17</div><div class="t" style="left:763.60px;top:736px;font-size:7.2px;line-height:7.2px;color:#3367d6;transform:scaleX(0.9700);transform-origin:0 0;">4%</div><div class="t" style="left:582.60px;top:736px;font-size:7.2px;line-height:7.2px;color:#222;">16</div><div class="t" style="left:592.90px;top:750px;font-size:7.2px;line-height:7.2px;color:#444;">0%</div><div class="t" style="left:670.90px;top:750px;font-size:7.2px;line-height:7.2px;color:#444;">2%</div><div class="t" style="left:748.90px;top:750px;font-size:7.2px;line-height:7.2px;color:#444;">4%</div><div class="t" style="left:844.10px;top:541px;font-size:8.8px;line-height:8.8px;color:#202124;font-weight:700;transform:scaleX(0.9485);transform-origin:0 0;">Column</div><div class="t" style="left:843.40px;top:554px;font-size:9.8px;line-height:9.8px;color:#000;">score</div><div class="t" style="left:1390.20px;top:538px;font-size:10.2px;line-height:10.2px;color:#3367d6;font-weight:700;transform:scaleX(0.8588);transform-origin:0 0;">JOBS</div><div class="t" style="left:1454.60px;top:538px;font-size:10.2px;line-height:10.2px;color:#3367d6;font-weight:700;transform:scaleX(0.8867);transform-origin:0 0;">STATISTIC</div><div class="t" style="left:1388.80px;top:559px;font-size:10px;line-height:10px;color:#202124;transform:scaleX(0.9619);transform-origin:0 0;">90 scans</div><div class="t" style="left:1455.20px;top:559px;font-size:10px;line-height:10px;color:#202124;transform:scaleX(0.9119);transform-origin:0 0;">Average</div><div class="t" style="left:1182.40px;top:589px;font-size:7.2px;line-height:7.2px;color:#444;">45</div><div class="t" style="left:1182.40px;top:621px;font-size:7.2px;line-height:7.2px;color:#444;">40</div><div class="t" style="left:1182.40px;top:654px;font-size:7.2px;line-height:7.2px;color:#444;">35</div><div class="t" style="left:1182.40px;top:686px;font-size:7.2px;line-height:7.2px;color:#444;">30</div><div class="t" style="left:1182.40px;top:719px;font-size:7.2px;line-height:7.2px;color:#444;">25</div><div class="t" style="left:1182.40px;top:751px;font-size:7.2px;line-height:7.2px;color:#444;">20</div><div class="t" style="left:1182.40px;top:784px;font-size:7.2px;line-height:7.2px;color:#444;">15</div><div class="t" style="left:867.16px;top:793px;font-size:7.4px;line-height:7.4px;color:#444;">May 25, 2023</div><div class="t" style="left:923.34px;top:793px;font-size:7.4px;line-height:7.4px;color:#444;">Jun 8, 2023</div><div class="t" style="left:975.09px;top:793px;font-size:7.4px;line-height:7.4px;color:#444;">Jun 22, 2023</div><div class="t" style="left:1031.58px;top:793px;font-size:7.4px;line-height:7.4px;color:#444;">Jul 6, 2023</div><div class="t" style="left:1082.42px;top:793px;font-size:7.4px;line-height:7.4px;color:#444;">Jul 20, 2023</div><div class="t" style="left:1135.62px;top:793px;font-size:7.4px;line-height:7.4px;color:#444;">Aug 3, 2023</div><div class="t" style="left:837.90px;top:793px;font-size:7.4px;line-height:7.4px;color:#444;">UTC-7</div><div class="t" style="left:1214.40px;top:609px;font-size:13.5px;line-height:13.5px;color:#202124;transform:scaleX(1.0136);transform-origin:0 0;">Statistics</div><div class="t" style="left:1214.40px;top:634px;font-size:9.4px;line-height:9.4px;color:#202124;font-weight:700;transform:scaleX(0.9550);transform-origin:0 0;">Average</div><div class="t" style="left:1337.30px;top:634px;font-size:9.4px;line-height:9.4px;color:#5f6368;">21.88</div><div class="t" style="left:1214.40px;top:652px;font-size:9.4px;line-height:9.4px;color:#202124;font-weight:700;transform:scaleX(0.9567);transform-origin:0 0;">Standard deviation</div><div class="t" style="left:1337.30px;top:652px;font-size:9.4px;line-height:9.4px;color:#5f6368;">20.45</div><div class="t" style="left:1214.40px;top:670px;font-size:9.4px;line-height:9.4px;color:#202124;font-weight:700;transform:scaleX(0.9925);transform-origin:0 0;">Minimum</div><div class="t" style="left:1337.30px;top:670px;font-size:9.4px;line-height:9.4px;color:#5f6368;">1</div><div class="t" style="left:1214.40px;top:688px;font-size:9.4px;line-height:9.4px;color:#202124;font-weight:700;transform:scaleX(0.9629);transform-origin:0 0;">Lower Quartile</div><div class="t" style="left:1337.30px;top:688px;font-size:9.4px;line-height:9.4px;color:#5f6368;">5</div><div class="t" style="left:1214.40px;top:706px;font-size:9.4px;line-height:9.4px;color:#202124;font-weight:700;transform:scaleX(0.9827);transform-origin:0 0;">Median Quartile</div><div class="t" style="left:1337.30px;top:706px;font-size:9.4px;line-height:9.4px;color:#5f6368;">17</div><div class="t" style="left:1214.40px;top:724px;font-size:9.4px;line-height:9.4px;color:#202124;font-weight:700;transform:scaleX(0.9614);transform-origin:0 0;">Upper Quartile</div><div class="t" style="left:1337.30px;top:724px;font-size:9.4px;line-height:9.4px;color:#5f6368;">32</div><div class="t" style="left:1214.40px;top:742px;font-size:9.4px;line-height:9.4px;color:#202124;font-weight:700;">Maximum</div><div class="t" style="left:1337.30px;top:742px;font-size:9.4px;line-height:9.4px;color:#5f6368;">100</div><div class="t" style="left:1380.90px;top:609px;font-size:13.5px;line-height:13.5px;color:#202124;transform:scaleX(0.9730);transform-origin:0 0;">Top 10 values</div><div class="t" style="left:1539.75px;top:639px;font-size:7.2px;line-height:7.2px;color:#3367d6;transform:scaleX(0.9700);transform-origin:0 0;">3.414%</div><div class="t" style="left:1385.80px;top:640px;font-size:7.2px;line-height:7.2px;color:#222;">2</div><div class="t" style="left:1524.30px;top:650px;font-size:7.2px;line-height:7.2px;color:#3367d6;transform:scaleX(0.9700);transform-origin:0 0;">3.0179%</div><div class="t" style="left:1385.80px;top:650px;font-size:7.2px;line-height:7.2px;color:#222;">1</div><div class="t" style="left:1513.30px;top:661px;font-size:7.2px;line-height:7.2px;color:#3367d6;transform:scaleX(0.9700);transform-origin:0 0;">2.7358%</div><div class="t" style="left:1385.80px;top:661px;font-size:7.2px;line-height:7.2px;color:#222;">3</div><div class="t" style="left:1484.96px;top:672px;font-size:7.2px;line-height:7.2px;color:#3367d6;transform:scaleX(0.9700);transform-origin:0 0;">2.0093%</div><div class="t" style="left:1385.80px;top:672px;font-size:7.2px;line-height:7.2px;color:#222;">4</div><div class="t" style="left:1468.17px;top:682px;font-size:7.2px;line-height:7.2px;color:#3367d6;transform:scaleX(0.9700);transform-origin:0 0;">1.5788%</div><div class="t" style="left:1385.80px;top:682px;font-size:7.2px;line-height:7.2px;color:#222;">5</div><div class="t" style="left:1458.13px;top:693px;font-size:7.2px;line-height:7.2px;color:#3367d6;transform:scaleX(0.9700);transform-origin:0 0;">1.3213%</div><div class="t" style="left:1385.80px;top:693px;font-size:7.2px;line-height:7.2px;color:#222;">6</div><div class="t" style="left:1451.29px;top:704px;font-size:7.2px;line-height:7.2px;color:#3367d6;transform:scaleX(0.9700);transform-origin:0 0;">1.1459%</div><div class="t" style="left:1385.80px;top:704px;font-size:7.2px;line-height:7.2px;color:#222;">7</div><div class="t" style="left:1447.76px;top:714px;font-size:7.2px;line-height:7.2px;color:#3367d6;transform:scaleX(0.9700);transform-origin:0 0;">1.0555%</div><div class="t" style="left:1385.80px;top:715px;font-size:7.2px;line-height:7.2px;color:#222;">8</div><div class="t" style="left:1444.80px;top:725px;font-size:7.2px;line-height:7.2px;color:#3367d6;transform:scaleX(0.9700);transform-origin:0 0;">0.9796%</div><div class="t" style="left:1385.80px;top:725px;font-size:7.2px;line-height:7.2px;color:#222;">9</div><div class="t" style="left:1443.15px;top:736px;font-size:7.2px;line-height:7.2px;color:#3367d6;transform:scaleX(0.9700);transform-origin:0 0;">0.9372%</div><div class="t" style="left:1382.34px;top:736px;font-size:7.2px;line-height:7.2px;color:#222;">11</div><div class="t" style="left:1392.10px;top:750px;font-size:7.2px;line-height:7.2px;color:#444;">0%</div><div class="t" style="left:1470.10px;top:750px;font-size:7.2px;line-height:7.2px;color:#444;">2%</div><div class="t" style="left:1548.10px;top:750px;font-size:7.2px;line-height:7.2px;color:#444;">4%</div>
</div></body></html>
